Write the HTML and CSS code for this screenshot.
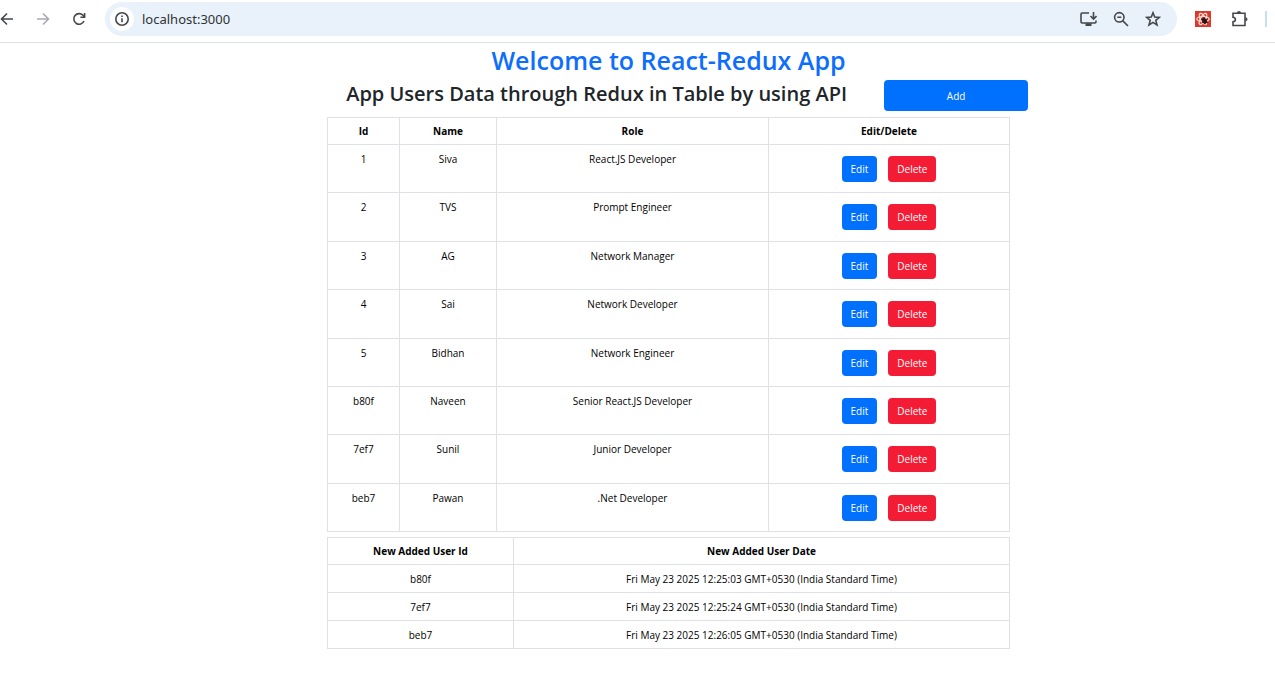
FILE: index.html
```html
<!DOCTYPE html>
<html lang="en">
<head>
<meta charset="utf-8">
<meta name="viewport" content="width=device-width, initial-scale=1">
<title>React-Redux App</title>
<link rel="stylesheet" href="styles.css">
</head>
<body>
<header class="toolbar">
  <nav class="nav" aria-label="Browser">
    <button class="icon-btn" aria-label="Back"><svg viewBox="0 0 16 16"><path d="M14 8H2.500M8 2.500 2.500 8 8 13.500"/></svg></button>
    <button class="icon-btn faded" aria-label="Forward"><svg viewBox="0 0 16 16"><path d="M2 8h11.500M8 2.500 13.500 8 8 13.500"/></svg></button>
    <button class="icon-btn" aria-label="Reload"><svg viewBox="0 0 16 16"><path d="M13 10a5.300 5.300 0 1 1-1-5.700L13.500 6M13.600 2v4.200H9.400"/></svg></button>
  </nav>
  <div class="address">
    <button class="icon-btn info" aria-label="Site information"><svg viewBox="0 0 16 16"><circle cx="8" cy="8" r="6.200"/><path d="M8 7.300v4M8 4.500v1.500"/></svg></button>
    <input class="url" type="text" value="localhost:3000" aria-label="Address">
    <button class="icon-btn" aria-label="Install app"><svg class="wide" viewBox="0 0 18 16"><path d="M10 2H3.200Q2 2 2 3.200v7.600Q2 12 3.200 12h12.600q1.200 0 1.200-1.200V9.500M14.500 1v6.500M11.500 5l3 3 3-3"/><path d="M6.500 12.300h6V15h-6z" class="solid"/></svg></button>
    <button class="icon-btn" aria-label="Zoom"><svg viewBox="0 0 16 16"><circle cx="6.300" cy="6.300" r="4.700"/><path d="M9.600 9.600 15 15M4.300 6.300h4"/></svg></button>
    <button class="icon-btn" aria-label="Bookmark"><svg viewBox="0 0 16 16"><path d="m8 1.800 1.700 4.300 4.700.3-3.600 3 1.200 4.500L8 11.400l-4 2.500 1.200-4.500-3.600-3 4.700-.3z"/></svg></button>
  </div>
  <div class="extensions">
    <button class="icon-btn" aria-label="React developer tools"><svg viewBox="0 0 16 16"><path d="M0 0h16v16H0z" class="red"/><g class="atom"><ellipse cx="8" cy="8" rx="6.200" ry="2.500"/><ellipse cx="8" cy="8" rx="6.200" ry="2.500" transform="rotate(60 8 8)"/><ellipse cx="8" cy="8" rx="6.200" ry="2.500" transform="rotate(120 8 8)"/></g><ellipse cx="9.500" cy="9.800" rx="2.400" ry="3.100" class="bug" transform="rotate(-35 9.500 9.800)"/><path class="legs" d="m6 8 7 4M9 6l1 7.500M12.500 8 7 12"/></svg></button>
    <button class="icon-btn" aria-label="Extensions"><svg class="wide" viewBox="0 0 18 16"><path d="M2 2.200h12v12.300H2v-3.700q2.400-.2 2.400-2.300T2 6.200z"/><path class="solid" d="M6 2a2 2 0 0 1 4 0zM14.500 6.200a2 2 0 0 1 0 4z"/></svg></button>
    <span class="divider"></span>
  </div>
</header>

<main class="page">
  <div class="content">
    <h1 class="title">Welcome to React-Redux App</h1>
    <div class="heading-row">
      <h2 class="subtitle">App Users Data through Redux in Table by using API</h2>
      <button class="btn btn-add">Add</button>
    </div>

    <table class="table users">
      <colgroup><col class="col-id"><col class="col-name"><col class="col-role"><col></colgroup>
      <thead><tr><th>Id</th><th>Name</th><th>Role</th><th>Edit/Delete</th></tr></thead>
      <tbody>
        <tr><td>1</td><td>Siva</td><td>React.JS Developer</td><td><div class="actions"><button class="btn">Edit</button><button class="btn btn-danger">Delete</button></div></td></tr>
        <tr><td>2</td><td>TVS</td><td>Prompt Engineer</td><td><div class="actions"><button class="btn">Edit</button><button class="btn btn-danger">Delete</button></div></td></tr>
        <tr><td>3</td><td>AG</td><td>Network Manager</td><td><div class="actions"><button class="btn">Edit</button><button class="btn btn-danger">Delete</button></div></td></tr>
        <tr><td>4</td><td>Sai</td><td>Network Developer</td><td><div class="actions"><button class="btn">Edit</button><button class="btn btn-danger">Delete</button></div></td></tr>
        <tr><td>5</td><td>Bidhan</td><td>Network Engineer</td><td><div class="actions"><button class="btn">Edit</button><button class="btn btn-danger">Delete</button></div></td></tr>
        <tr><td>b80f</td><td>Naveen</td><td>Senior React.JS Developer</td><td><div class="actions"><button class="btn">Edit</button><button class="btn btn-danger">Delete</button></div></td></tr>
        <tr><td>7ef7</td><td>Sunil</td><td>Junior Developer</td><td><div class="actions"><button class="btn">Edit</button><button class="btn btn-danger">Delete</button></div></td></tr>
        <tr><td>beb7</td><td>Pawan</td><td>.Net Developer</td><td><div class="actions"><button class="btn">Edit</button><button class="btn btn-danger">Delete</button></div></td></tr>
      </tbody>
    </table>

    <table class="table added">
      <colgroup><col class="col-added-id"><col></colgroup>
      <thead><tr><th>New Added User Id</th><th>New Added User Date</th></tr></thead>
      <tbody>
        <tr><td>b80f</td><td>Fri May 23 2025 12:25:03 GMT+0530 (India Standard Time)</td></tr>
        <tr><td>7ef7</td><td>Fri May 23 2025 12:25:24 GMT+0530 (India Standard Time)</td></tr>
        <tr><td>beb7</td><td>Fri May 23 2025 12:26:05 GMT+0530 (India Standard Time)</td></tr>
      </tbody>
    </table>
  </div>
</main>
</body>
</html>
```

FILE: styles.css
```css
* {
  box-sizing: border-box;
}

body {
  margin: 0;
  background: #fff;
  color: #000;
  font-family: "Open Sans", "Noto Sans", sans-serif;
  font-size: 10px;
  line-height: 16px;
}

button,
input {
  font: inherit;
}

/* Browser toolbar */
.toolbar {
  display: flex;
  align-items: center;
  padding: 2px 8px 6px 0;
  border-bottom: 1px solid #dee1e6;
}

.nav {
  display: flex;
  gap: 20px;
  margin-right: 18px;
}

.icon-btn {
  display: flex;
  padding: 0;
  border: 0;
  background: none;
  color: #45474a;
}

.icon-btn svg {
  width: 16px;
  height: 16px;
  fill: none;
  stroke: currentColor;
  stroke-width: 1.6;
}

.icon-btn .wide {
  width: 18px;
}

.nav .icon-btn:first-child {
  margin-left: -1px;
}

.faded {
  color: #a9abae;
}

.address {
  display: flex;
  flex: 1;
  align-items: center;
  gap: 16px;
  height: 34px;
  padding: 0 16px 0 5px;
  border-radius: 17px;
  background: #e9f1fa;
}

.info {
  padding: 4px;
  border-radius: 50%;
  background: #fff;
}

.url {
  flex: 1;
  min-width: 0;
  margin-left: -8px;
  padding: 0;
  border: 0;
  outline: 0;
  background: none;
  color: #303235;
  font-family: "Noto Sans", sans-serif;
  font-size: 13px;
}

.extensions {
  display: flex;
  align-items: center;
  gap: 20px;
  padding-left: 18px;
}

.divider {
  width: 2px;
  height: 16px;
  margin-left: -4px;
  background: #c9ddf5;
}

.icon-btn .solid {
  fill: currentColor;
  stroke: none;
}

.red {
  fill: #d93a2b;
  stroke: none;
}

.atom {
  stroke: #fbe4e0;
  stroke-width: 1.2;
}

.bug {
  fill: #2b1613;
  stroke: none;
}

.legs {
  stroke: #2b1613;
  stroke-width: 1;
}

/* Page content */
.page {
  padding-left: 62px;
}

.content {
  max-width: 683px;
  margin: 0 auto;
}

.title {
  margin: 0;
  padding: 1px 0 4px;
  color: #0d6efd;
  font-size: 25px;
  font-weight: 600;
  line-height: 32px;
  text-align: center;
}

.heading-row {
  display: grid;
  grid-template-columns: 4fr 1fr;
  margin: 0 -18px 6px;
}

.subtitle {
  margin: 0;
  color: #212529;
  font-size: 20px;
  font-weight: 600;
  line-height: 28px;
  text-align: center;
}

.btn {
  padding: 5px 9px;
  border: 0;
  border-radius: 4px;
  background: #0070ff;
  color: #fff;
}

.btn-add {
  height: 31px;
}

.btn-danger {
  background: #f41c35;
}

.table {
  width: 100%;
  border-collapse: collapse;
  table-layout: fixed;
  text-align: center;
}

.table th,
.table td {
  padding: 6px;
  border: 1px solid #dee2e6;
  vertical-align: top;
}

.table th {
  padding: 5px 6px;
}

.users {
  height: 415px;
  margin-bottom: 5px;
}

.added td {
  padding-bottom: 5px;
}

.col-id {
  width: 72px;
}

.col-name {
  width: 97px;
}

.col-role {
  width: 272px;
}

.col-added-id {
  width: 186px;
}

.actions {
  display: flex;
  justify-content: center;
  gap: 11px;
  padding: 5px 0 4px;
}
```
